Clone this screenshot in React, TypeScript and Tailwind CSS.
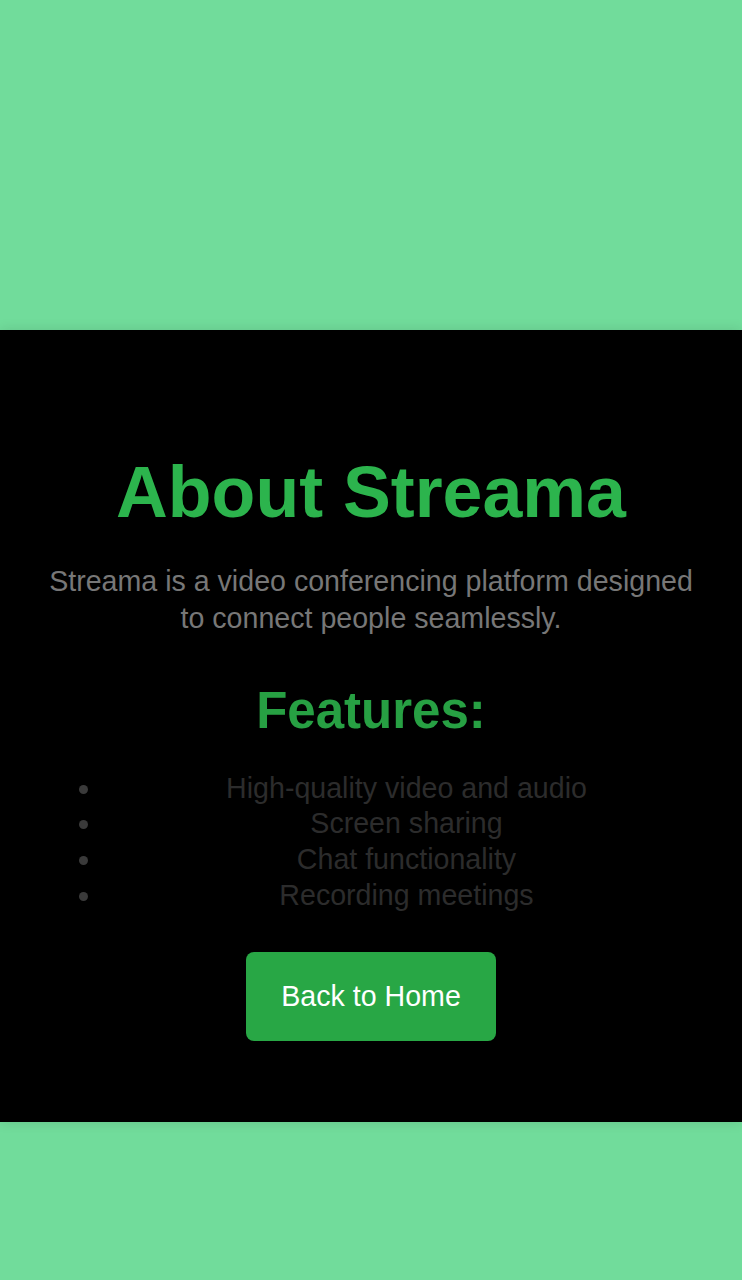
import React from 'react';

const features = [
  'High-quality video and audio',
  'Screen sharing',
  'Chat functionality',
  'Recording meetings',
];

export default function App() {
  return (
    <div
      className="min-h-screen bg-[#71dc9b] pt-[330px] pb-[158px]"
      style={{ fontFamily: '"Liberation Sans", Arial, sans-serif' }}
    >
      <div className="w-full bg-black px-[40px] pt-[127px] pb-[81px] text-center shadow-[0_0_12px_rgba(0,0,0,0.12)]">
        <h1 className="text-[71.7px] font-bold leading-none text-[#2cb44d]">About Streama</h1>

        <p className="mt-[34px] text-[28.6px] leading-[37px] text-[#777777]">
          Streama is a video conferencing platform designed to connect people seamlessly.
        </p>

        <h2 className="mt-[48px] text-[51px] font-bold leading-none text-[#27a043]">Features:</h2>

        <ul className="mt-[35px] -mr-[8px] list-disc pl-[63px] text-[28.6px] leading-[35.7px] text-[#2c2c2c] marker:text-[#3a3a3a]">
          {features.map((f) => (
            <li key={f}>{f}</li>
          ))}
        </ul>

        <button className="mx-auto mt-[38px] flex h-[89px] w-[250px] items-center justify-center rounded-lg bg-[#28a745] text-[28.6px] text-white">
          Back to Home
        </button>
      </div>
    </div>
  );
}
